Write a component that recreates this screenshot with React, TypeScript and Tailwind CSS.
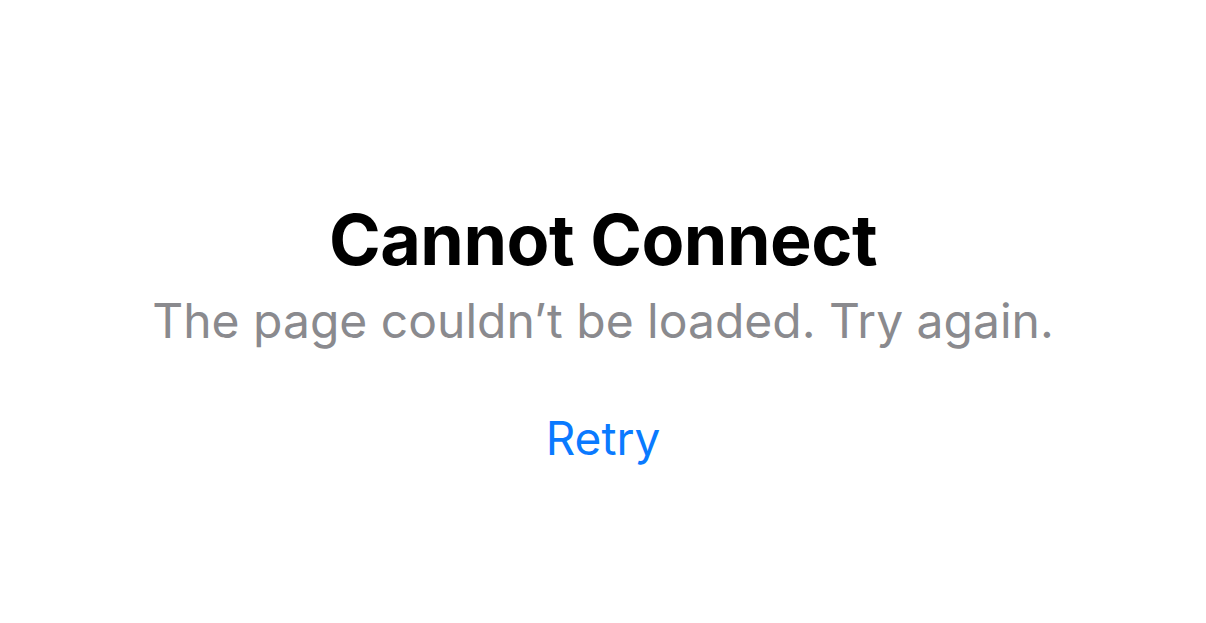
export default function App() {
  return (
    <div className="min-h-screen w-full bg-white flex flex-col items-center font-['Inter',sans-serif]">
      <div className="pt-[200px] flex flex-col items-center">
        <h1 className="text-[70px] leading-[80px] font-bold text-black tracking-[-0.5px]">Cannot Connect</h1>
        <p className="text-[48px] leading-[56px] text-[#8a8a8e] mt-[13px]">The page couldn’t be loaded. Try again.</p>
        <button className="mt-[64px] text-[46px] leading-[50px] text-[#0a7aff]">Retry</button>
      </div>
    </div>
  );
}
